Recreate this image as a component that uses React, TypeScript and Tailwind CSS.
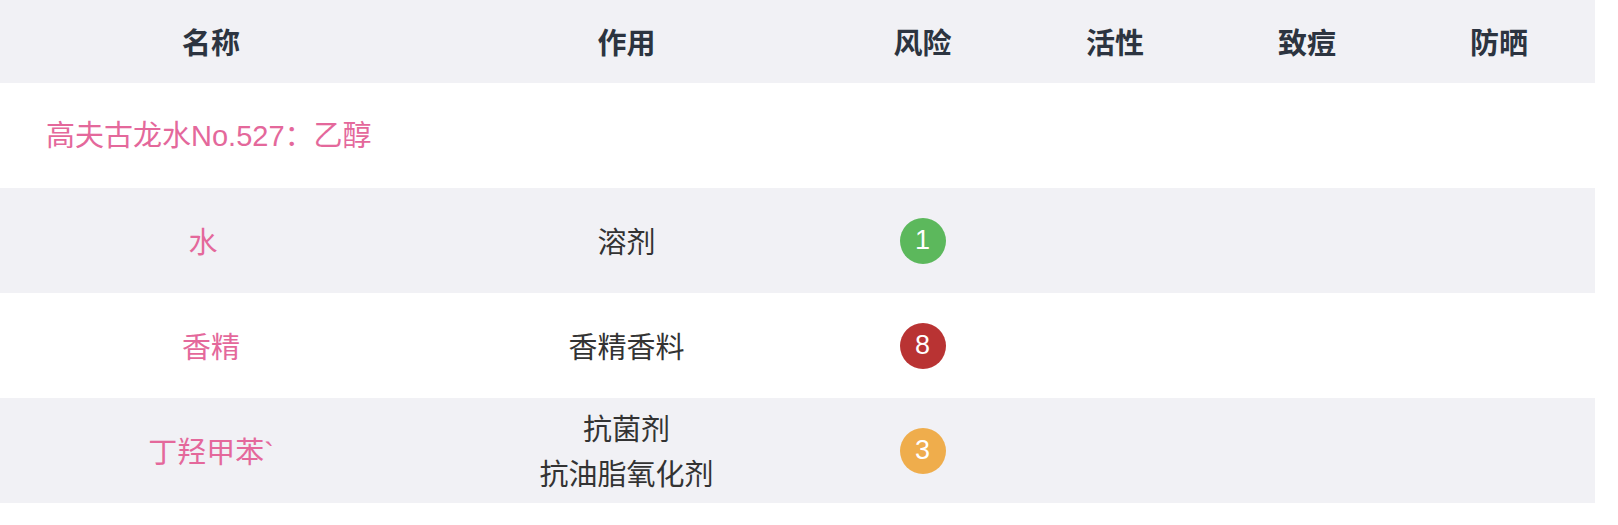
import React from "react";

const cols = "grid grid-cols-[422px_404px_193px_192px_192px_192px]";
const font = { fontFamily: '"Liberation Sans", "Noto Sans CJK SC", sans-serif' };

function Badge({ n, color }: { n: number; color: string }) {
  return (
    <span className={`flex h-[46px] w-[46px] items-center justify-center rounded-full text-[27px] leading-none text-white ${color}`}>
      {n}
    </span>
  );
}

type Row = { name: string; uses: string[]; risk: number; color: string; pad?: boolean };

const rows: Row[] = [
  { name: "水", uses: ["溶剂"], risk: 1, color: "bg-[#5cb85c]", pad: true },
  { name: "香精", uses: ["香精香料"], risk: 8, color: "bg-[#b93333]" },
  { name: "丁羟甲苯`", uses: ["抗菌剂", "抗油脂氧化剂"], risk: 3, color: "bg-[#efad4c]" },
];

export default function App() {
  return (
    <div className="min-h-[525px] w-[1618px] bg-white" style={font}>
      <div className="w-[1595px]">
        <div className={`${cols} h-[83px] items-center bg-[#f1f1f5] text-[29px] font-bold text-[#2c3440]`}>
          {["名称", "作用", "风险", "活性", "致痘", "防晒"].map((h, i) => (
            <div key={h} className={`pt-[6px] text-center ${i === 1 ? "pl-[5px]" : ""}`}>{h}</div>
          ))}
        </div>
        <div className="flex h-[105px] items-center bg-white pl-[46px] pt-[2px] text-[29px] text-[#e4689b]">
          高夫古龙水No.527：乙醇
        </div>
        {rows.map((r, i) => (
          <div
            key={r.name}
            className={`${cols} h-[105px] items-center text-[29px] leading-[45px] ${i % 2 === 0 ? "bg-[#f1f1f5]" : "bg-white"}`}
          >
            <div className="pt-[5px] text-center text-[#e4689b]">
              <span className={r.pad ? "pr-[16px]" : ""}>{r.name}</span>
            </div>
            <div className="flex flex-col items-center pl-[5px] pt-[5px] text-[#333333]">
              {r.uses.map((u) => (
                <div key={u}>{u}</div>
              ))}
            </div>
            <div className="flex justify-center">
              <Badge n={r.risk} color={r.color} />
            </div>
            <div />
            <div />
            <div />
          </div>
        ))}
      </div>
    </div>
  );
}
